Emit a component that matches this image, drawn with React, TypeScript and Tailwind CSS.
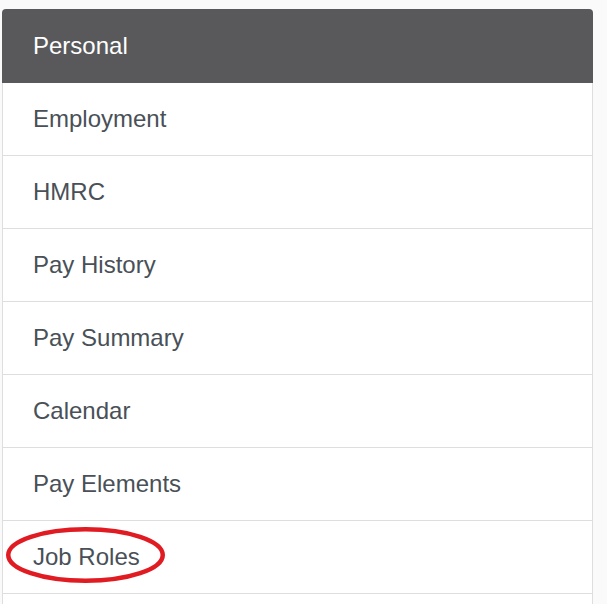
const items = [
  "Employment",
  "HMRC",
  "Pay History",
  "Pay Summary",
  "Calendar",
  "Pay Elements",
  "Job Roles",
];

export default function App() {
  return (
    <div
      className="h-[604px] w-full overflow-hidden bg-[#fafafa] pt-[9px] pl-[2px]"
      style={{ fontFamily: '"Liberation Sans", Arial, sans-serif' }}
    >
      <div className="w-[591px]">
        {/* Active header item */}
        <div className="flex h-[74px] items-center rounded-t-[4px] bg-[#59595b] pl-[31px] text-[24px] text-white">
          Personal
        </div>

        {items.map((label) => (
          <div
            key={label}
            className="relative flex h-[73px] items-center border-x border-b border-[#dedede] bg-white pl-[30px] text-[24px] text-[#495057]"
          >
            {label}
            {label === "Job Roles" && (
              <svg
                className="absolute left-0 top-0"
                width="170"
                height="70"
                viewBox="0 0 170 70"
              >
                <ellipse
                  cx="82.5"
                  cy="34"
                  rx="77.25"
                  ry="25.75"
                  fill="none"
                  stroke="#e01b22"
                  strokeWidth="4.5"
                />
              </svg>
            )}
          </div>
        ))}

        {/* next row, cut off by the frame */}
        <div className="h-[73px] border-x border-b border-[#dedede] bg-white" />
      </div>
    </div>
  );
}
